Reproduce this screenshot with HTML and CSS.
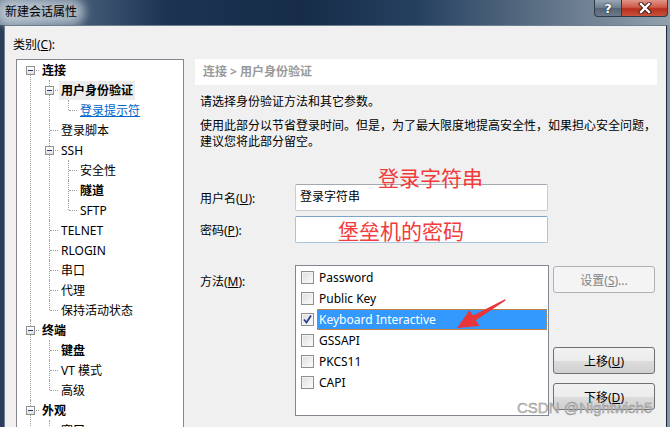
FILE: index.html
```html
<!DOCTYPE html>
<html lang="zh-CN">
<head>
    <meta charset="UTF-8">
    <meta name="viewport" content="width=device-width, initial-scale=1.0">
    <title>新建会话属性</title>
    <link rel="stylesheet" href="styles.css">
</head>
<body>

<div class="window">
    <div class="titlebar">
        <span class="title">新建会话属性</span>
        <div class="caption-buttons">
            <span class="cap-help">?</span>
            <span class="cap-close">
                <svg width="16" height="12" viewBox="0 0 16 12">
                    <path d="M4 2 L12 10 M12 2 L4 10" stroke="#3a1a14" stroke-width="4.2" stroke-linecap="square"/>
                    <path d="M4 2 L12 10 M12 2 L4 10" stroke="#fff" stroke-width="2.4" stroke-linecap="square"/>
                </svg>
            </span>
        </div>
    </div>

    <div class="panel">
        <div class="cat-label">类别(<u>C</u>):</div>

        <div class="tree">
            <ul class="root">
                <li>
                    <div class="row"><span class="exp"></span><span class="lbl bold">连接</span></div>
                    <ul>
                        <li>
                            <div class="row"><span class="exp"></span><span class="lbl bold sel">用户身份验证</span></div>
                            <ul>
                                <li><div class="row"><span class="lbl link">登录提示符</span></div></li>
                            </ul>
                        </li>
                        <li><div class="row"><span class="lbl">登录脚本</span></div></li>
                        <li>
                            <div class="row"><span class="exp"></span><span class="lbl">SSH</span></div>
                            <ul>
                                <li><div class="row"><span class="lbl">安全性</span></div></li>
                                <li><div class="row"><span class="lbl bold">隧道</span></div></li>
                                <li><div class="row"><span class="lbl">SFTP</span></div></li>
                            </ul>
                        </li>
                        <li><div class="row"><span class="lbl">TELNET</span></div></li>
                        <li><div class="row"><span class="lbl">RLOGIN</span></div></li>
                        <li><div class="row"><span class="lbl">串口</span></div></li>
                        <li><div class="row"><span class="lbl">代理</span></div></li>
                        <li><div class="row"><span class="lbl">保持活动状态</span></div></li>
                    </ul>
                </li>
                <li>
                    <div class="row"><span class="exp"></span><span class="lbl bold">终端</span></div>
                    <ul>
                        <li><div class="row"><span class="lbl bold">键盘</span></div></li>
                        <li><div class="row"><span class="lbl">VT 模式</span></div></li>
                        <li><div class="row"><span class="lbl">高级</span></div></li>
                    </ul>
                </li>
                <li>
                    <div class="row"><span class="exp"></span><span class="lbl bold">外观</span></div>
                    <ul>
                        <li><div class="row"><span class="lbl">窗口</span></div></li>
                    </ul>
                </li>
                <li><div class="row"><span class="lbl">高级</span></div></li>
            </ul>
        </div>

        <div class="right">
            <div class="crumb">连接 &gt; 用户身份验证</div>

            <p class="desc first">请选择身份验证方法和其它参数。</p>
            <p class="desc">使用此部分以节省登录时间。但是，为了最大限度地提高安全性，如果担心安全问题，<br>建议您将此部分留空。</p>

            <div class="form">
                <label class="field-label">用户名(<u>U</u>):</label>
                <div class="textbox">登录字符串</div>
                <div></div>

                <label class="field-label">密码(<u>P</u>):</label>
                <div class="textbox pwd"></div>
                <div></div>

                <label class="field-label method-label">方法(<u>M</u>):</label>
                <div class="listbox">
                    <div class="item"><span class="cb"></span><span class="item-text">Password</span></div>
                    <div class="item"><span class="cb"></span><span class="item-text">Public Key</span></div>
                    <div class="item">
                        <span class="cb">
                            <svg width="11" height="11" viewBox="0 0 11 11"><path d="M2 5.5 L4.5 8.5 L9 1.5" fill="none" stroke="#2b3f8a" stroke-width="1.8"/></svg>
                        </span>
                        <span class="item-text selected">Keyboard Interactive</span>
                    </div>
                    <div class="item"><span class="cb"></span><span class="item-text">GSSAPI</span></div>
                    <div class="item"><span class="cb"></span><span class="item-text">PKCS11</span></div>
                    <div class="item"><span class="cb"></span><span class="item-text">CAPI</span></div>
                </div>
                <div class="side-buttons">
                    <button class="btn" disabled>设置(<u>S</u>)...</button>
                    <button class="btn up">上移(<u>U</u>)</button>
                    <button class="btn down">下移(<u>D</u>)</button>
                </div>
            </div>
        </div>
    </div>

    <!-- annotations drawn over the screenshot -->
    <div class="note note-user">登录字符串</div>
    <div class="note note-pwd">堡垒机的密码</div>
    <svg class="arrow" width="670" height="427" viewBox="0 0 670 427">
        <polygon points="457,328 469.5,310 473,315.5 505,299.3 505.6,300.6 475.8,320.2 479.5,326" fill="#e8363a"/>
    </svg>
    <div class="watermark">CSDN @Nightwish5</div>
</div>

</body>
</html>
```

FILE: styles.css
```css
body {
    margin: 0;
    width: 670px;
    height: 427px;
    overflow: hidden;
    font-family: "Noto Sans", "Noto Sans CJK SC", sans-serif;
    font-size: 12px;
    color: #000;
}
.window {
    position: relative;
    height: 427px;
    display: flex;
    flex-direction: column;
    background: linear-gradient(90deg, #2a3f57 0%, #1f3550 60%, #8795a4 100%);
}
.titlebar {
    height: 25px;
    flex: none;
    display: flex;
    justify-content: space-between;
    align-items: flex-start;
    background: linear-gradient(90deg, #75889b 0%, #4a627c 10%, #1c3452 25%, #162c48 45%, #25405f 62%, #5a6e84 80%, #93a1ae 100%);
}
.title {
    margin: 4px 0 0 3px;
    line-height: 16px;
    padding: 0 2px;
    color: #000;
    background: rgba(235, 240, 245, 0.55);
    border-radius: 8px;
    box-shadow: 0 0 8px 6px rgba(235, 240, 245, 0.55);
}
.caption-buttons {
    display: flex;
    margin-right: 2px;
}
.cap-help,
.cap-close {
    height: 16px;
    display: flex;
    align-items: center;
    justify-content: center;
    border: 1px solid #2d3a48;
    border-top: none;
    color: #fff;
    font-weight: bold;
    font-size: 13px;
    font-family: "DejaVu Sans", sans-serif;
}
.cap-help {
    width: 26px;
    border-radius: 0 0 0 4px;
    background: linear-gradient(#9aa7b4, #6d7c8b 50%, #566473 51%, #6b7a88);
    text-shadow: 0 0 2px #1e2833, 0 0 1px #1e2833;
}
.cap-close {
    width: 45px;
    border-left: none;
    border-radius: 0 0 4px 0;
    background: linear-gradient(#e0958a, #cf5a48 45%, #b72f1c 55%, #c8503a);
}
.cap-close svg {
    display: block;
}
.panel {
    flex: 1;
    margin: 0 3px 0 4px;
    border: 1px solid #6e7f90;
    border-bottom: none;
    border-right-color: #1d2a38;
    background: #f0f0f0;
    padding: 11px 9px 0 11px;
    display: grid;
    grid-template-columns: 168px 462px;
    grid-template-rows: 16px 1fr;
    column-gap: 11px;
    row-gap: 6px;
    overflow: hidden;
}
.cat-label {
    grid-column: 1 / 3;
    margin-left: -3px;
    line-height: 16px;
}
.tree {
    border: 1px solid #828790;
    background: #fff;
    height: 380px;
    overflow: hidden;
}
.tree ul {
    list-style: none;
    margin: 0;
    padding: 0;
}
.tree ul ul {
    padding-left: 19px;
}
.tree li {
    position: relative;
}
.tree li::before {
    content: "";
    position: absolute;
    left: 13px;
    top: 0;
    bottom: 0;
    border-left: 1px dotted #a0a0a0;
}
.tree li:last-child::before {
    bottom: auto;
    height: 10px;
}
.tree .root > li:first-child::before {
    top: 10px;
}
.row {
    position: relative;
    height: 20px;
    padding-left: 23px;
    display: flex;
    align-items: center;
    white-space: nowrap;
}
.row::before {
    content: "";
    position: absolute;
    left: 14px;
    top: 10px;
    width: 8px;
    border-top: 1px dotted #a0a0a0;
}
.exp {
    position: absolute;
    z-index: 1;
    left: 9px;
    top: 6px;
    width: 7px;
    height: 7px;
    border: 1px solid #929292;
    background: linear-gradient(#ffffff, #dedede);
}
.exp::after {
    content: "";
    position: absolute;
    left: 1px;
    top: 3px;
    width: 5px;
    height: 1px;
    background: #2b3a78;
}
.lbl {
    padding: 0 2px;
    line-height: 19px;
}
.bold {
    font-weight: bold;
}
.sel {
    background: #ececec;
}
.link {
    color: #0066cc;
    text-decoration: underline;
}
.right {
    position: relative;
}
.crumb {
    height: 26px;
    line-height: 26px;
    padding-left: 8px;
    background: #fff;
    color: #999;
    font-weight: bold;
}
.desc {
    margin: 8px 0 0 5px;
    line-height: 16px;
    white-space: nowrap;
}
.desc.first {
    margin-top: 9px;
}
.form {
    margin-top: 34px;
    display: grid;
    grid-template-columns: 96px 254px 102px;
    grid-template-rows: 27px 27px auto;
    column-gap: 4px;
    row-gap: 5px;
}
.field-label {
    padding-left: 5px;
    align-self: center;
}
.textbox {
    width: 253px;
    box-sizing: border-box;
    border: 1px solid #c9cdd3;
    border-top-color: #a3a7ae;
    border-radius: 2px;
    background: #fff;
    padding-left: 4px;
    line-height: 24px;
}
.textbox.pwd {
    border-color: #a9c4de;
    border-top-color: #7fa3c8;
}
.method-label {
    align-self: start;
    margin-top: 22px;
    padding-top: 4px;
    line-height: 16px;
}
.listbox {
    margin-top: 17px;
    height: 151px;
    box-sizing: border-box;
    border: 1px solid #828790;
    background: #fff;
    padding-top: 1px;
}
.item {
    height: 21px;
    display: flex;
    align-items: center;
}
.cb {
    width: 11px;
    height: 11px;
    margin-left: 5px;
    border: 1px solid #8e8f8f;
    background: linear-gradient(135deg, #dcdcdc, #fdfdfd);
    box-shadow: inset 0 0 0 1px #f4f4f4;
    display: flex;
}
.item-text {
    flex: 1;
    margin: 0 1px 0 3px;
    padding-left: 1px;
    height: 19px;
    line-height: 19px;
    border: 1px dotted transparent;
    white-space: nowrap;
}
.item-text.selected {
    background: #3399ff;
    color: #fff;
    border-color: #c98a4a;
}
.side-buttons {
    margin-top: 18px;
    display: flex;
    flex-direction: column;
}
.btn {
    height: 27px;
    width: 102px;
    font-family: inherit;
    font-size: 12px;
    border: 1px solid #707070;
    border-radius: 3px;
    background: linear-gradient(#f2f2f2 0%, #ebebeb 50%, #dddddd 51%, #cfcfcf 100%);
    color: #000;
    padding: 0;
}
.btn:disabled {
    border-color: #adb2b5;
    background: #f4f4f4;
    color: #838383;
}
.btn.up {
    margin-top: 54px;
}
.btn.down {
    margin-top: 9px;
}
.note {
    position: absolute;
    color: #f23b3b;
    font-size: 21px;
    line-height: 24px;
    font-family: "Noto Sans CJK SC", sans-serif;
}
.note-user {
    left: 378px;
    top: 165px;
}
.note-pwd {
    left: 338px;
    top: 218px;
}
.arrow {
    position: absolute;
    left: 0;
    top: 0;
    pointer-events: none;
}
.watermark {
    position: absolute;
    left: 517px;
    top: 399px;
    font-family: "Liberation Sans", sans-serif;
    font-size: 15px;
    color: #c4c4c4;
    -webkit-text-stroke: 0.4px #8a8a8a;
}
```
